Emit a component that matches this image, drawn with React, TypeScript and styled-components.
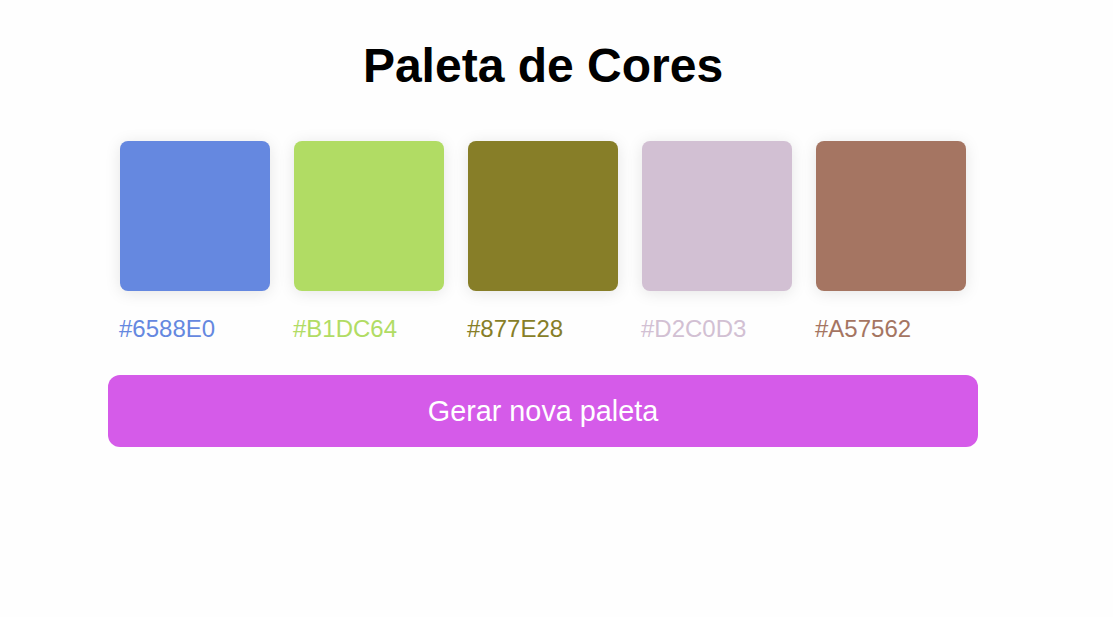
import React from "react";
import styled, { createGlobalStyle } from "styled-components";

const Global = createGlobalStyle`
  html, body { margin: 0; padding: 0; background: #fefefe; }
  body { font-family: "Liberation Sans", Arial, sans-serif; }
`;

const Page = styled.main`
  width: 870px;
  margin-left: 108px;
  padding-top: 38px;
  display: flex;
  flex-direction: column;
  align-items: stretch;
`;

const Title = styled.h1`
  margin: 0 0 48px;
  text-align: center;
  font-size: 48px;
  font-weight: 700;
  line-height: 55px;
  color: #000;
`;

const Palette = styled.div`
  display: flex;
  gap: 24px;
  padding: 0 12px;
`;

const Card = styled.div`
  display: flex;
  flex-direction: column;
  gap: 24px;
  width: 150px;
`;

const Swatch = styled.div<{ $color: string }>`
  width: 150px;
  height: 150px;
  border-radius: 8px;
  background: ${(p) => p.$color};
  box-shadow: 0 2px 16px rgba(0, 0, 0, 0.1);
`;

const Label = styled.span<{ $color: string }>`
  font-size: 24px;
  line-height: 28px;
  color: ${(p) => p.$color};
  margin-left: -1px;
`;

const Button = styled.button`
  margin-top: 32px;
  height: 72px;
  border: none;
  border-radius: 12px;
  background: #d55be9;
  color: #fff;
  font-family: "Liberation Sans", Arial, sans-serif;
  font-size: 28.8px;
  cursor: pointer;
`;

const colors = ["#6588E0", "#B1DC64", "#877E28", "#D2C0D3", "#A57562"];

export default function App() {
  return (
    <>
      <Global />
      <Page>
        <Title>Paleta de Cores</Title>
        <Palette>
          {colors.map((c) => (
            <Card key={c}>
              <Swatch $color={c} />
              <Label $color={c}>{c}</Label>
            </Card>
          ))}
        </Palette>
        <Button>Gerar nova paleta</Button>
      </Page>
    </>
  );
}
